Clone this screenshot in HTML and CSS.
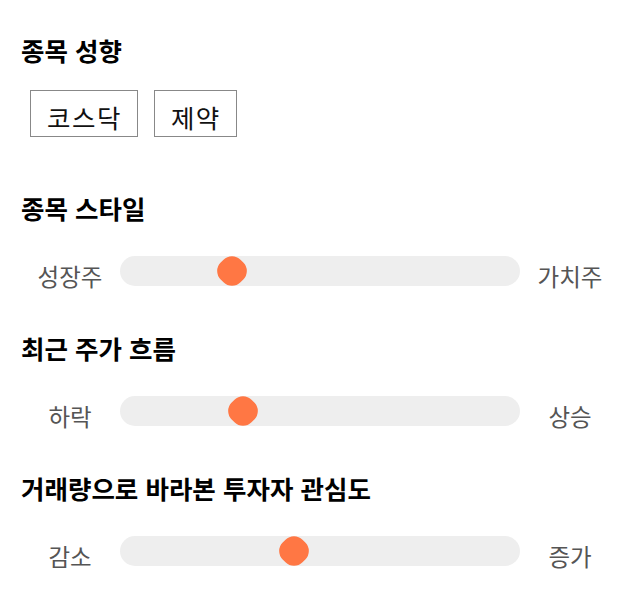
FILE: index.html
```html
<!DOCTYPE html>
<html lang="ko">
<head>
<meta charset="utf-8">
<link rel="stylesheet" href="styles.css">
</head>
<body>
<div class="page">
  <section class="section first">
    <h2 class="title">종목 성향</h2>
    <div class="tags">
      <span class="tag">코스닥</span>
      <span class="tag">제약</span>
    </div>
  </section>
  <section class="section">
    <h2 class="title">종목 스타일</h2>
    <div class="row">
      <span class="label">성장주</span>
      <div class="track"><span class="thumb" style="left: 27.9%"></span></div>
      <span class="label">가치주</span>
    </div>
  </section>
  <section class="section">
    <h2 class="title">최근 주가 흐름</h2>
    <div class="row">
      <span class="label">하락</span>
      <div class="track"><span class="thumb" style="left: 30.8%"></span></div>
      <span class="label">상승</span>
    </div>
  </section>
  <section class="section">
    <h2 class="title">거래량으로 바라본 투자자 관심도</h2>
    <div class="row">
      <span class="label">감소</span>
      <div class="track"><span class="thumb" style="left: 43.5%"></span></div>
      <span class="label">증가</span>
    </div>
  </section>
</div>
</body>
</html>
```
FILE: styles.css
```css
* { box-sizing: border-box; }
html, body { margin: 0; padding: 0; background: #fff; }
body {
  font-family: "Noto Sans CJK KR", "Noto Sans", sans-serif;
  color: #000;
}
.page {
  width: 640px;
  min-height: 606px;
  padding: 34px 20px 0 20px;
}
.section { margin-top: 46px; }
.section.first { margin-top: 0; }
.title {
  margin: 0 0 0 1px;
  font-size: 25.5px;
  font-weight: 700;
  line-height: 32px;
  height: 32px;
  color: #000;
}
.tags {
  display: flex;
  gap: 16px;
  margin: 24px 0 55px 10px;
}
.tag {
  display: inline-block;
  border: 1px solid #888;
  font-size: 25.5px;
  letter-spacing: 1.5px;
  line-height: 33px;
  padding: 9px 15px 3px 16px;
  color: #111;
}
.row {
  display: flex;
  align-items: flex-start;
  height: 30px;
  margin-top: 32px;
}
.label {
  width: 100px;
  text-align: center;
  font-size: 23.5px;
  line-height: 40px;
  color: #555;
}
.track {
  position: relative;
  width: 400px;
  height: 30px;
  background: #eeeeee;
  border-radius: 15px;
}
.thumb {
  position: absolute;
  top: 1px;
  width: 28px;
  height: 28px;
  margin-left: -14px;
  background: #ff7744;
  border-radius: 12px;
  transform: rotate(45deg);
}
```
